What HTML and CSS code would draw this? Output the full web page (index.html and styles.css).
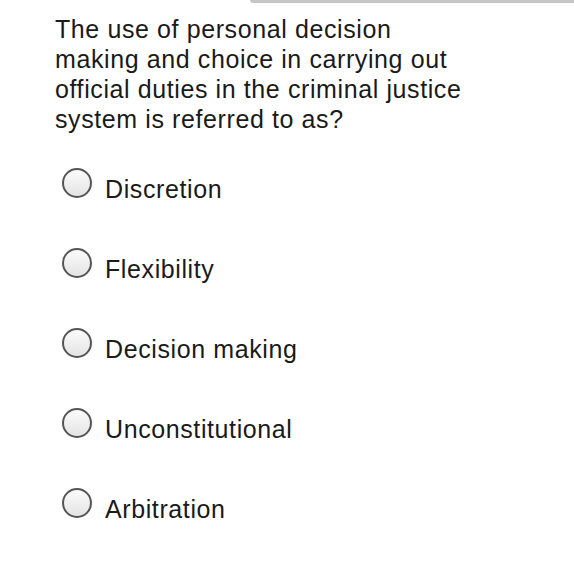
FILE: index.html
```html
<!DOCTYPE html>
<html>
<head>
<meta charset="utf-8">
<link rel="stylesheet" href="styles.css">
</head>
<body>
<div class="topbar"></div>
<div class="question">The use of personal decision<br>making and choice in carrying out<br>official duties in the criminal justice<br>system is referred to as?</div>
<div class="options">
  <div class="option"><span class="radio"></span><span class="label">Discretion</span></div>
  <div class="option"><span class="radio"></span><span class="label">Flexibility</span></div>
  <div class="option"><span class="radio"></span><span class="label">Decision making</span></div>
  <div class="option"><span class="radio"></span><span class="label">Unconstitutional</span></div>
  <div class="option"><span class="radio"></span><span class="label">Arbitration</span></div>
</div>
</body>
</html>
```
FILE: styles.css
```css
html, body {
  margin: 0;
  padding: 0;
  background: #ffffff;
}
body {
  font-family: "Liberation Sans", Arial, sans-serif;
  color: #1a1a1a;
  font-size: 25px;
  letter-spacing: 0.6px;
  width: 574px;
  height: 573px;
  overflow: hidden;
}
.topbar {
  margin-left: 250px;
  height: 3px;
  background: #c6c6c6;
  border-bottom-left-radius: 3px;
}
.question {
  padding: 11px 0 0 55px;
  line-height: 30px;
}
.options {
  display: flex;
  flex-direction: column;
  padding: 34px 0 0 62px;
}
.option {
  display: flex;
  align-items: flex-start;
  height: 80px;
}
.radio {
  box-sizing: border-box;
  width: 30px;
  height: 30px;
  border-radius: 50%;
  border: 2px solid #555555;
  background: linear-gradient(#fbfbfb, #e4e4e4);
  flex: none;
}
.label {
  margin: 6px 0 0 13px;
  line-height: 30px;
}
```
